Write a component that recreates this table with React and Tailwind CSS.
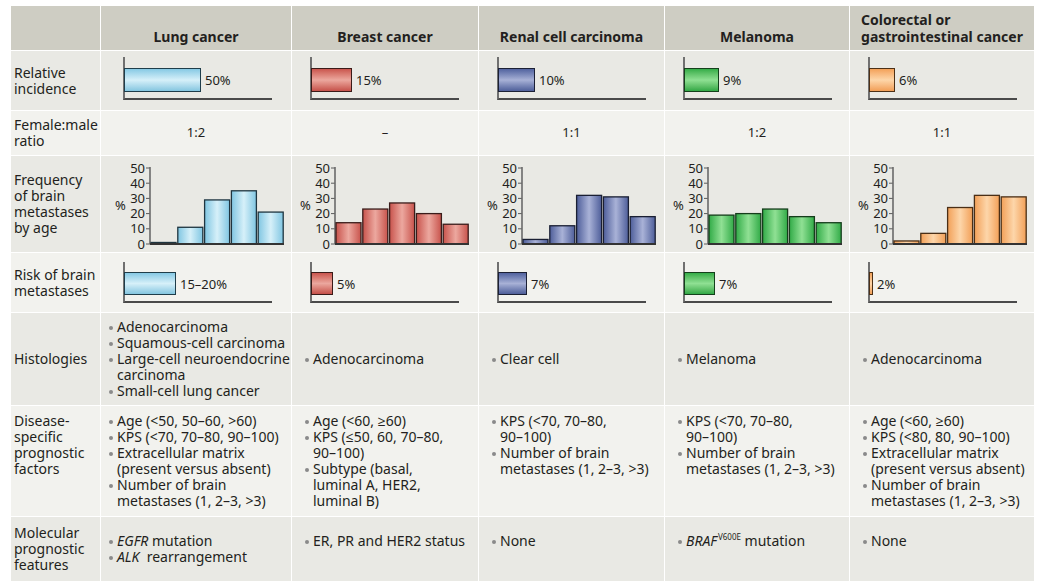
import React from 'react';

const palette = {
  blue: {
    bar: 'bg-linear-to-b from-[#86c9e4] via-[#d6f0f9] to-[#84c6e0] border-[#1f3d4a]',
    edge: '#80c6e2', mid: '#d6f0f9', stroke: '#1f3540',
  },
  red: {
    bar: 'bg-linear-to-b from-[#c9554e] via-[#eba79e] to-[#c5504a] border-[#3b1b18]',
    edge: '#c8534c', mid: '#eca89f', stroke: '#3a1c1a',
  },
  navy: {
    bar: 'bg-linear-to-b from-[#52639f] via-[#a8b1d6] to-[#4f5f9a] border-[#1b2035]',
    edge: '#4e5e9a', mid: '#a9b2d7', stroke: '#1a1f33',
  },
  green: {
    bar: 'bg-linear-to-b from-[#33ad48] via-[#8fe093] to-[#30a845] border-[#14401b]',
    edge: '#31ab47', mid: '#90e094', stroke: '#153d1b',
  },
  orange: {
    bar: 'bg-linear-to-b from-[#f3a158] via-[#fdd6a9] to-[#f19e55] border-[#4d3016]',
    edge: '#f2a058', mid: '#fdd6aa', stroke: '#4a2f16',
  },
};

const cancers = [
  {
    key: 'lung',
    first: true,
    name: 'Lung cancer',
    incidence: '50%',
    incW: 'w-[77px]',
    ratio: '1:2',
    hist: [1, 11, 29, 35, 21],
    risk: '15–20%',
    riskW: 'w-[52px]',
    color: palette.blue,
    histologies: [
      ['Adenocarcinoma'],
      ['Squamous-cell carcinoma'],
      ['Large-cell neuroendocrine', 'carcinoma'],
      ['Small-cell lung cancer'],
    ],
    factors: [
      ['Age (<50, 50–60, >60)'],
      ['KPS (<70, 70–80, 90–100)'],
      ['Extracellular matrix', '(present versus absent)'],
      ['Number of brain', 'metastases (1, 2–3, >3)'],
    ],
    molecular: [
      [<><i>EGFR</i> mutation</>],
      [<><i>ALK</i>{'\u00a0'} rearrangement</>],
    ],
  },
  {
    key: 'breast',
    name: 'Breast cancer',
    incidence: '15%',
    incW: 'w-[41px]',
    ratio: '–',
    hist: [14, 23, 27, 20, 13],
    risk: '5%',
    riskW: 'w-[22px]',
    color: palette.red,
    histologies: [['Adenocarcinoma']],
    factors: [
      ['Age (<60, ≥60)'],
      ['KPS (≤50, 60, 70–80,', '90–100)'],
      ['Subtype (basal,', 'luminal A, HER2,', 'luminal B)'],
    ],
    molecular: [['ER, PR and HER2 status']],
  },
  {
    key: 'renal',
    name: 'Renal cell carcinoma',
    incidence: '10%',
    incW: 'w-[37px]',
    ratio: '1:1',
    hist: [3, 12, 32, 31, 18],
    risk: '7%',
    riskW: 'w-[29px]',
    color: palette.navy,
    histologies: [['Clear cell']],
    factors: [
      ['KPS (<70, 70–80,', '90–100)'],
      ['Number of brain', 'metastases (1, 2–3, >3)'],
    ],
    molecular: [['None']],
  },
  {
    key: 'melanoma',
    name: 'Melanoma',
    incidence: '9%',
    incW: 'w-[35px]',
    ratio: '1:2',
    hist: [19, 20, 23, 18, 14],
    risk: '7%',
    riskW: 'w-[31px]',
    color: palette.green,
    histologies: [['Melanoma']],
    factors: [
      ['KPS (<70, 70–80,', '90–100)'],
      ['Number of brain', 'metastases (1, 2–3, >3)'],
    ],
    molecular: [
      [<><i>BRAF</i><sup className="text-[8px] leading-none top-[-6px] ml-[1px]">V600E</sup> mutation</>],
    ],
  },
  {
    key: 'colorectal',
    name: (
      <span className="inline-block text-left">
        Colorectal or
        <br />
        gastrointestinal cancer
      </span>
    ),
    incidence: '6%',
    incW: 'w-[26px]',
    ratio: '1:1',
    hist: [2, 7, 24, 32, 31],
    risk: '2%',
    riskW: 'w-[4px]',
    color: palette.orange,
    histologies: [['Adenocarcinoma']],
    factors: [
      ['Age (<60, ≥60)'],
      ['KPS (<80, 80, 90–100)'],
      ['Extracellular matrix', '(present versus absent)'],
      ['Number of brain', 'metastases (1, 2–3, >3)'],
    ],
    molecular: [['None']],
  },
];

const Bullets = ({ items }) => (
  <div className="flex flex-col">
    {items.map((lines, i) => (
      <div key={i} className="flex">
        <div className="w-[8px] h-[16px] shrink-0 flex items-center">
          <span className="block w-[4px] h-[4px] mt-[1px] rounded-full bg-[#8a8a8a]" />
        </div>
        <div>
          {lines.map((l, j) => (
            <div key={j} className="whitespace-nowrap">{l}</div>
          ))}
        </div>
      </div>
    ))}
  </div>
);

// horizontal bar with L-shaped axis
const BarAxis = ({ w, label, color, h, barH }) => (
  <div className={`flex items-end w-[149px] border-l-2 border-b-2 border-l-[#707070] border-b-[#4a4a4a] ${h}`}>
    <div className="flex items-center mb-[6px] ml-[-1px]">
      <div className={`border-[1.5px] ${barH} ${w} ${color.bar}`} />
      <span className="ml-[4px] text-[13px] leading-[16px]">{label}</span>
    </div>
  </div>
);

const Histogram = ({ id, data, color }) => {
  const top = 8;
  const bottom = 84;
  const ax = 38;
  const unit = (bottom - top) / 50;
  const pitch = 26.8;
  return (
    <svg width="176" height="94" className="block" style={{ fontFamily: '"Noto Sans", sans-serif' }}>
      <defs>
        <linearGradient id={`g-${id}`} x1="0" x2="1" y1="0" y2="0">
          <stop offset="0" stopColor={color.edge} />
          <stop offset="0.5" stopColor={color.mid} />
          <stop offset="1" stopColor={color.edge} />
        </linearGradient>
      </defs>
      <text x="3" y="50" fontSize="13" fill="#231f20">%</text>
      {[50, 40, 30, 20, 10, 0].map(v => {
        const y = bottom - v * unit;
        return (
          <g key={v}>
            <text x="33" y={y + 4.5} fontSize="13" textAnchor="end" fill="#231f20">{v}</text>
            <line x1="34" x2={ax} y1={y} y2={y} stroke="#5a5a5a" strokeWidth="1" />
          </g>
        );
      })}
      <line x1={ax} x2={ax} y1={top - 1} y2={bottom} stroke="#6a6a6a" strokeWidth="1.6" />
      {data.map((v, i) => (
        <rect
          key={i}
          x={ax + i * pitch + 1}
          y={bottom - v * unit}
          width={pitch - 1.8}
          height={v * unit}
          fill={`url(#g-${id})`}
          stroke={color.stroke}
          strokeWidth="1.3"
        />
      ))}
      <line x1={ax} x2={ax + pitch * 5} y1={bottom} y2={bottom} stroke="#333" strokeWidth="1.8" />
    </svg>
  );
};

const App = () => {
  const dark = 'bg-[#e9e9e4]';
  const light = 'bg-[#f2f2ee]';
  const label = 'flex items-center pl-[3px] text-[14px] leading-[16px]';
  return (
    <div
      className="min-h-[587px] bg-white text-[#231f20] pt-[6px] pl-[11px]"
      style={{ fontFamily: '"Noto Sans", "Open Sans", sans-serif' }}
    >
      <div className="grid gap-[1px] grid-cols-[89px_190px_186px_185px_184px_184px] grid-rows-[44px_59px_44px_96px_59px_92px_110px_64px] w-[1023px]">
        {/* HEADER */}
        <div className="bg-[#cecdc3]" />
        {cancers.map(c => (
          <div key={c.key} className="bg-[#cecdc3] flex items-end justify-center pb-[5px] font-bold text-[14px] leading-[17px]">
            {c.name}
          </div>
        ))}

        {/* RELATIVE INCIDENCE */}
        <div className={`${dark} ${label}`}>Relative<br />incidence</div>
        {cancers.map(c => (
          <div key={c.key} className={`${dark} pt-[6px] ${c.first ? 'pl-[22px]' : 'pl-[18px]'}`}>
            <BarAxis w={c.incW} label={c.incidence} color={c.color} h="h-[43px]" barH="h-[24px]" />
          </div>
        ))}

        {/* FEMALE:MALE */}
        <div className={`${light} ${label}`}>Female:male<br />ratio</div>
        {cancers.map(c => (
          <div key={c.key} className={`${light} flex items-center justify-center text-[13px]`}>
            {c.ratio}
          </div>
        ))}

        {/* FREQUENCY BY AGE */}
        <div className={`${dark} ${label}`}>
          Frequency<br />of brain<br />metastases<br />by age
        </div>
        {cancers.map(c => (
          <div key={c.key} className={`${dark} pt-[4px] ${c.first ? 'pl-[11px]' : 'pl-[5px]'}`}>
            <Histogram id={c.key} data={c.hist} color={c.color} />
          </div>
        ))}

        {/* RISK */}
        <div className={`${light} ${label}`}>Risk of brain<br />metastases</div>
        {cancers.map(c => (
          <div key={c.key} className={`${light} pt-[9px] ${c.first ? 'pl-[22px]' : 'pl-[18px]'}`}>
            <BarAxis w={c.riskW} label={c.risk} color={c.color} h="h-[41px]" barH="h-[23px]" />
          </div>
        ))}

        {/* HISTOLOGIES */}
        <div className={`${dark} ${label}`}>Histologies</div>
        {cancers.map(c => (
          <div key={c.key} className={`${dark} flex items-center text-[14px] leading-[16px] ${c.first ? 'pl-[8px]' : 'pl-[13px]'}`}>
            <Bullets items={c.histologies} />
          </div>
        ))}

        {/* DISEASE-SPECIFIC FACTORS */}
        <div className={`${light} pt-[7px] pl-[3px] text-[14px] leading-[16px]`}>
          Disease-<br />specific<br />prognostic<br />factors
        </div>
        {cancers.map(c => (
          <div key={c.key} className={`${light} pt-[7px] text-[14px] leading-[16px] ${c.first ? 'pl-[8px]' : 'pl-[13px]'}`}>
            <Bullets items={c.factors} />
          </div>
        ))}

        {/* MOLECULAR */}
        <div className={`${dark} ${label}`}>
          Molecular<br />prognostic<br />features
        </div>
        {cancers.map(c => (
          <div key={c.key} className={`${dark} pt-[16px] text-[14px] leading-[16px] ${c.first ? 'pl-[8px]' : 'pl-[13px]'}`}>
            <Bullets items={c.molecular} />
          </div>
        ))}
      </div>
    </div>
  );
};

export default App;
